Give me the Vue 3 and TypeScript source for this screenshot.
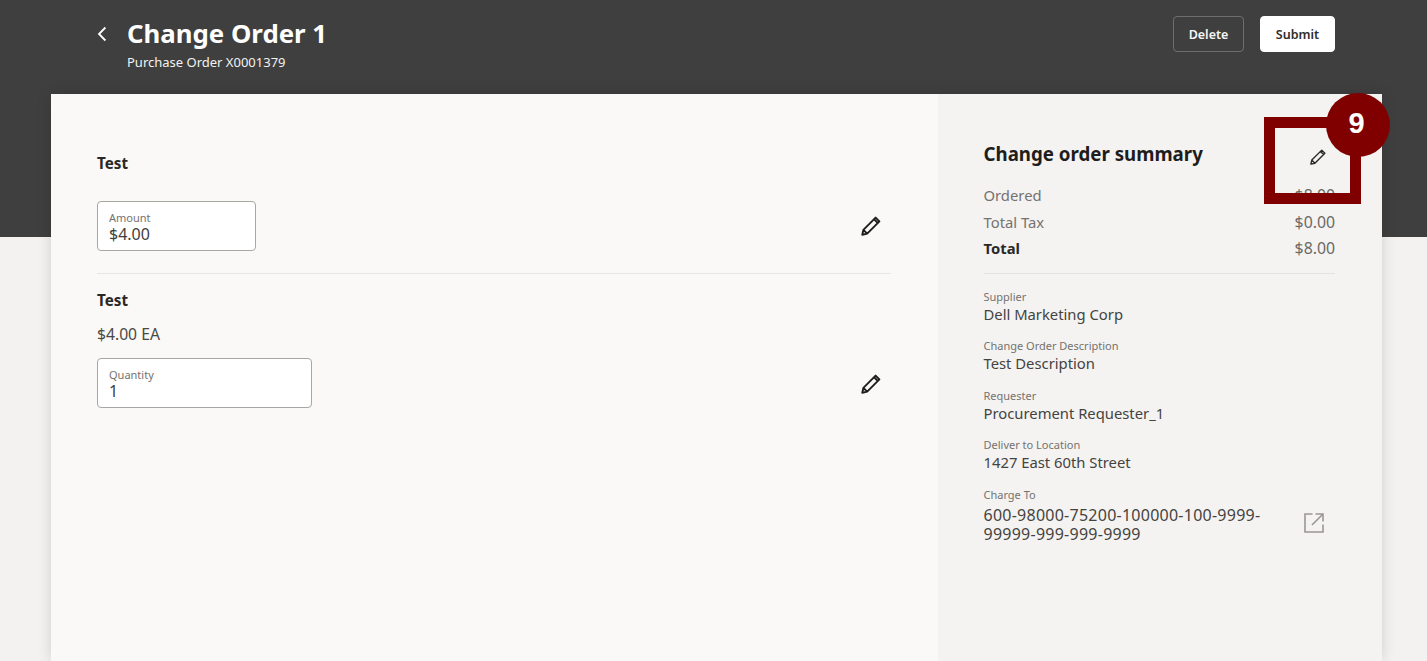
<script setup lang="ts">
interface Detail { label: string; value: string }
const details: Detail[] = [
  { label: 'Supplier', value: 'Dell Marketing Corp' },
  { label: 'Change Order Description', value: 'Test Description' },
  { label: 'Requester', value: 'Procurement Requester_1' },
  { label: 'Deliver to Location', value: '1427 East 60th Street' },
]
</script>

<template>
  <div class="page">
    <header class="hero">
      <div class="hero-left">
        <svg class="back" width="12" height="16" viewBox="0 0 12 16" fill="none">
          <path d="M8.4 1.5 L2 8 L8.4 14.5" stroke="#fff" stroke-width="1.8" />
        </svg>
        <div>
          <h1 class="title">Change Order 1</h1>
          <div class="subtitle">Purchase Order X0001379</div>
        </div>
      </div>
      <div class="actions">
        <button class="btn btn-outline">Delete</button>
        <button class="btn btn-solid">Submit</button>
      </div>
    </header>

    <main class="card">
      <section class="lines">
        <div class="line line-first">
          <div class="line-main">
            <div class="line-name">Test</div>
            <div class="field field-amount">
              <span class="field-label">Amount</span>
              <span class="field-value">$4.00</span>
            </div>
          </div>
          <svg class="pencil" width="22" height="22" viewBox="0 0 22 22" fill="none">
            <path d="M2.3 19.7 L3.4 14.8 L15.6 2.6 L19.4 6.4 L7.2 18.6 Z M14 4.2 L17.8 8 M3.4 14.8 L7.2 18.6" stroke="#1f1d1b" stroke-width="1.9" stroke-linejoin="round" />
          </svg>
        </div>
        <div class="line line-second">
          <div class="line-main">
            <div class="line-name">Test</div>
            <div class="line-price">$4.00 EA</div>
            <div class="field field-qty">
              <span class="field-label">Quantity</span>
              <span class="field-value">1</span>
            </div>
          </div>
          <svg class="pencil" width="22" height="22" viewBox="0 0 22 22" fill="none">
            <path d="M2.3 19.7 L3.4 14.8 L15.6 2.6 L19.4 6.4 L7.2 18.6 Z M14 4.2 L17.8 8 M3.4 14.8 L7.2 18.6" stroke="#1f1d1b" stroke-width="1.9" stroke-linejoin="round" />
          </svg>
        </div>
      </section>

      <aside class="summary">
        <div class="summary-head">
          <h2 class="summary-title">Change order summary</h2>
          <svg class="pencil-small" width="18" height="18" viewBox="0 0 22 22" fill="none">
            <path d="M2.3 19.7 L3.4 14.8 L15.6 2.6 L19.4 6.4 L7.2 18.6 Z M14 4.2 L17.8 8 M3.4 14.8 L7.2 18.6" stroke="#2b2926" stroke-width="1.7" stroke-linejoin="round" />
          </svg>
        </div>
        <div class="totals">
          <div class="row"><span>Ordered</span><span class="amt">$8.00</span></div>
          <div class="row"><span>Total Tax</span><span class="amt">$0.00</span></div>
          <div class="row row-total"><span>Total</span><span class="amt">$8.00</span></div>
        </div>
        <dl class="details">
          <div v-for="d in details" :key="d.label" class="detail">
            <dt>{{ d.label }}</dt>
            <dd>{{ d.value }}</dd>
          </div>
          <div class="detail">
            <dt>Charge To</dt>
            <dd class="charge">
              <span class="charge-text">600-98000-75200-100000-100-9999-<br />99999-999-999-9999</span>
              <svg width="22" height="22" viewBox="0 0 22 22" fill="none">
                <path d="M9.5 2 H2 V20 H20 V12.5 M12.5 2 H20 V9.5 M20 2 L9 13" stroke="#9a9794" stroke-width="1.6" />
              </svg>
            </dd>
          </div>
        </dl>
      </aside>

      <div class="callout-box"></div>
      <div class="callout-badge">9</div>
    </main>
  </div>
</template>

<style>
html, body { margin: 0; padding: 0; }
</style>

<style scoped>
.page {
  height: 661px;
  overflow: hidden;
  background: #f3f2f0;
  font-family: "Noto Sans", "Open Sans", sans-serif;
  color: #3a3835;
}
.hero {
  height: 237px;
  box-sizing: border-box;
  margin-bottom: -143px;
  padding: 15px 92px 0 97px;
  background: #3f3f3f;
  display: flex;
  justify-content: space-between;
  align-items: flex-start;
}
.hero-left { display: flex; align-items: flex-start; gap: 18px; }
.back { margin-top: 11px; }
.title {
  margin: 0;
  font-size: 25.8px;
  line-height: 36px;
  font-weight: 700;
  color: #fff;
}
.subtitle {
  margin-top: 2px;
  font-size: 13px;
  line-height: 18px;
  color: #f2f2f2;
}
.actions { display: flex; gap: 16px; margin-top: 1px; }
.btn {
  height: 36px;
  border-radius: 4px;
  font-family: inherit;
  font-size: 12.5px;
  font-weight: 600;
  padding: 0;
}
.btn-outline {
  width: 71px;
  background: transparent;
  border: 1px solid #6e6e6e;
  color: #f5f5f5;
}
.btn-solid {
  width: 75px;
  background: #fff;
  border: 1px solid #fff;
  color: #2f2d2b;
}
.card {
  position: relative;
  margin: 0 45px 0 51px;
  height: 567px;
  display: flex;
  background: #faf9f7;
  box-shadow: 0 0 14px rgba(0, 0, 0, 0.14);
}
.lines {
  width: 887px;
  box-sizing: border-box;
  padding: 58px 47px 0 46px;
}
.line { display: flex; justify-content: space-between; align-items: flex-end; }
.line-first {
  padding-bottom: 22px;
  border-bottom: 1px solid #e8e6e3;
}
.line-second { padding-top: 15px; }
.line-main { flex: 1; }
.line-name {
  font-size: 15.2px;
  line-height: 22px;
  font-weight: 700;
  color: #2a2826;
}
.line-price {
  margin-top: 12px;
  font-size: 15.7px;
  line-height: 22px;
  color: #4a4845;
}
.field {
  box-sizing: border-box;
  height: 50px;
  background: #fff;
  border: 1px solid #a9a7a4;
  border-radius: 4px;
  padding: 8.5px 11px 0;
  display: flex;
  flex-direction: column;
}
.field-amount { width: 158.5px; margin-top: 27px; }
.field-qty { width: 214.5px; margin-top: 13px; }
.field-label {
  font-size: 11px;
  line-height: 14px;
  color: #75726f;
}
.field-value {
  font-size: 16px;
  line-height: 18px;
  color: #3f3d3a;
}
.pencil { margin: 0 9px 14px 0; flex: none; }
.line-second .pencil { margin-bottom: 13px; }
.summary {
  flex: 1;
  box-sizing: border-box;
  padding: 45px 47px 0 45.5px;
  background: #f4f3f1;
}
.summary-head {
  display: flex;
  justify-content: space-between;
  align-items: center;
  height: 28px;
}
.summary-title {
  margin: 0;
  font-size: 18.7px;
  line-height: 27px;
  font-weight: 700;
  color: #1f1d1b;
}
.pencil-small { margin: 8px 8px 0 0; }
.totals {
  margin-top: 15px;
  padding-bottom: 11px;
  border-bottom: 1px solid #e4e2df;
}
.row {
  display: flex;
  justify-content: space-between;
  font-size: 14.8px;
  line-height: 26.5px;
  color: #75726f;
}
.row-total span:first-child { font-weight: 700; color: #2a2826; }
.amt { color: #6a6865; font-size: 15.8px; }
.details { margin: 16px 0 0; }
.detail { margin-bottom: 15.5px; }
.detail dt {
  font-size: 11px;
  line-height: 14px;
  color: #75726f;
}
.detail dd {
  margin: 1px 0 0;
  font-size: 14.8px;
  line-height: 19px;
  color: #45433f;
}
.charge {
  display: flex;
  justify-content: space-between;
  align-items: center;
  margin-top: 4px !important;
  font-size: 16px !important;
  letter-spacing: 0.25px;
}
.charge-text { display: block; }
.charge svg { margin: 0 10px 4px 0; }
.callout-box {
  position: absolute;
  left: 1213px;
  top: 22.5px;
  width: 97px;
  height: 87px;
  box-sizing: border-box;
  border: 11px solid #800000;
}
.callout-badge {
  position: absolute;
  left: 1275px;
  top: -1px;
  width: 64px;
  height: 64px;
  box-sizing: border-box;
  padding: 0 3px 3px 0;
  border-radius: 50%;
  background: #800000;
  color: #fff;
  font-family: "Liberation Sans", sans-serif;
  font-size: 29px;
  font-weight: 700;
  display: flex;
  align-items: center;
  justify-content: center;
}
</style>
